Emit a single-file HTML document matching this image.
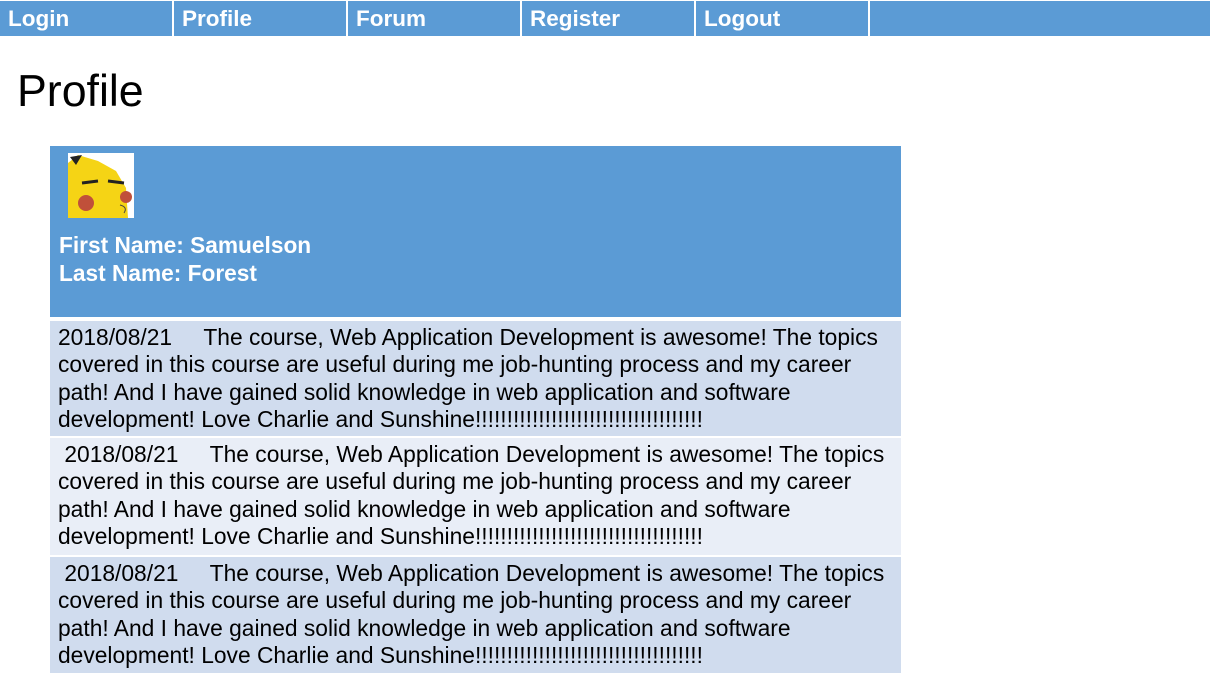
<!DOCTYPE html>
<html><head><style>
body{margin:0;background:#fff;font-family:"Liberation Sans",Arial,sans-serif;width:1210px;height:675px;overflow:hidden;position:relative}
.nav{position:absolute;top:1px;height:35px;background:#5b9bd5;color:#fff;font-weight:bold;font-size:22.5px;line-height:35px;padding-left:8px;box-sizing:border-box}
h1{position:absolute;left:17px;top:67px;margin:0;font-weight:normal;font-size:44.7px}
.hd{position:absolute;left:50px;top:146px;width:851px;height:171px;background:#5b9bd5;color:#fff;font-weight:bold;font-size:22.7px}
.row{position:absolute;left:50px;width:851px;box-sizing:border-box;padding:3px 8px 0;font-size:22.8px;line-height:27.3px;color:#000}
</style></head><body>
<div class="nav" style="left:0;width:172px">Login</div>
<div class="nav" style="left:174px;width:172px">Profile</div>
<div class="nav" style="left:348px;width:172px">Forum</div>
<div class="nav" style="left:522px;width:172px">Register</div>
<div class="nav" style="left:696px;width:172px">Logout</div>
<div class="nav" style="left:870px;width:340px"></div>
<h1>Profile</h1>
<div class="hd">
<svg style="position:absolute;left:18px;top:7px" width="66" height="65" viewBox="0 0 66 65">
<rect width="66" height="65" fill="#fff"/>
<path d="M0 10 L10 2 L30 8 L48 18 L58 35 L60 65 L0 65 Z" fill="#f5d415"/>
<path d="M2 4 L14 2 L8 12Z" fill="#222"/>
<circle cx="18" cy="50" r="8" fill="#c0503a"/>
<circle cx="58" cy="44" r="6" fill="#c0503a"/>
<path d="M14 30 L30 28 M40 28 L56 30" stroke="#222" stroke-width="3"/>
<path d="M52 52 q8 2 4 8" stroke="#444" fill="none"/>
</svg>
<div style="position:absolute;left:9px;top:85px;line-height:28px">First Name: Samuelson<br>Last Name: Forest</div>
</div>
<div class="row" style="top:321px;height:115px;background:#d0dcee">2018/08/21&nbsp;&nbsp;&nbsp;&nbsp; The course, Web Application Development is awesome! The topics covered in this course are useful during me job-hunting process and my career path! And I have gained solid knowledge in web application and software development! Love Charlie and Sunshine!!!!!!!!!!!!!!!!!!!!!!!!!!!!!!!!!!!!</div>
<div class="row" style="top:438px;height:117px;background:#e9eef7">&nbsp;2018/08/21&nbsp;&nbsp;&nbsp;&nbsp; The course, Web Application Development is awesome! The topics covered in this course are useful during me job-hunting process and my career path! And I have gained solid knowledge in web application and software development! Love Charlie and Sunshine!!!!!!!!!!!!!!!!!!!!!!!!!!!!!!!!!!!!</div>
<div class="row" style="top:557px;height:116px;background:#d0dcee">&nbsp;2018/08/21&nbsp;&nbsp;&nbsp;&nbsp; The course, Web Application Development is awesome! The topics covered in this course are useful during me job-hunting process and my career path! And I have gained solid knowledge in web application and software development! Love Charlie and Sunshine!!!!!!!!!!!!!!!!!!!!!!!!!!!!!!!!!!!!</div>
</body></html>
